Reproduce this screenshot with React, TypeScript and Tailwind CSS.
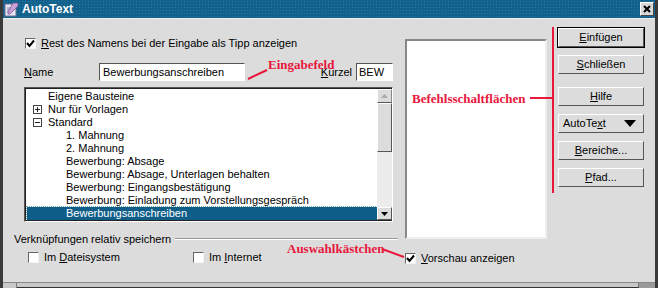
import React from 'react';

const Check = ({ checked }: { checked?: boolean }) => (
    <span className="inline-flex h-[11px] w-[11px] shrink-0 items-center justify-center border-t border-l border-[#666] border-r border-b border-r-[#f4f4f4] border-b-[#f4f4f4] bg-white">
        {checked && (
            <svg width="9" height="9" viewBox="0 0 9 9">
                <path d="M1 4 L3.5 7 L8 1.5" stroke="#000" strokeWidth="2" fill="none" />
            </svg>
        )}
    </span>
);

const Btn = ({ children, bold }: { children: React.ReactNode; bold?: boolean }) => (
    <div className={bold ? 'border border-black' : 'border border-transparent'}>
        <div className="flex h-[19px] items-center justify-center border-t border-l border-white border-r border-b border-r-[#555] border-b-[#555] bg-[#dcdcdc]">
            {children}
        </div>
    </div>
);

const treeItems = [
    { t: 'Eigene Bausteine', lvl: 0 },
    { t: 'Nur für Vorlagen', lvl: 0, icon: '+' },
    { t: 'Standard', lvl: 0, icon: '-' },
    { t: '1. Mahnung', lvl: 1 },
    { t: '2. Mahnung', lvl: 1 },
    { t: 'Bewerbung: Absage', lvl: 1 },
    { t: 'Bewerbung: Absage, Unterlagen behalten', lvl: 1 },
    { t: 'Bewerbung: Eingangsbestätigung', lvl: 1 },
    { t: 'Bewerbung: Einladung zum Vorstellungsgespräch', lvl: 1 },
    { t: 'Bewerbungsanschreiben', lvl: 1, sel: true },
    { t: 'Bücher', lvl: 1 },
];

const App = () => {
    return (
        <div className="relative h-[288px] w-[658px] overflow-hidden border-l-[3px] border-r-[3px] border-[#3a3a3a] bg-[#dcdcdc] font-['Liberation_Sans',Arial,sans-serif] text-[11px] text-black">
            {/* Titelleiste */}
            <div className="flex h-[18px] items-center bg-[#12618d] bg-[radial-gradient(#2a7aa6_1px,transparent_1px)] bg-[length:3px_3px] pl-[1px] pr-[1px]">
                <svg width="15" height="15" viewBox="0 0 15 15" className="mr-[3px]">
                    <rect x="1" y="2" width="11" height="12" fill="#e8e8f4" stroke="#6a6a8a" />
                    <path d="M3 6 h7 M3 8 h7 M3 10 h5" stroke="#7a7ab0" />
                    <path d="M9 1 L14 1 L14 4 L6 12 L4 12 L4 10 Z" fill="#c9a0d8" stroke="#705080" strokeWidth="0.7" />
                </svg>
                <span className="text-[12px] font-bold text-white">AutoText</span>
                <div className="ml-auto flex h-[14px] w-[14px] items-center justify-center border border-t-white border-l-white border-r-[#444] border-b-[#444] bg-[#d8d8d8]">
                    <svg width="8" height="8" viewBox="0 0 8 8">
                        <path d="M1 1 L7 7 M7 1 L1 7" stroke="#000" strokeWidth="2" />
                    </svg>
                </div>
            </div>

            <div className="flex h-[264px] border-t border-[#f0f0f0]">
                {/* Linke Spalte */}
                <div className="ml-[21px] flex w-[369px] flex-col">
                    <div className="mt-[17px] flex h-[14px] items-center gap-[5px] pl-[1px]">
                        <Check checked />
                        <span>
                            <u>R</u>est des Namens bei der Eingabe als Tipp anzeigen
                        </span>
                    </div>
                    <div className="mt-[13px] flex h-[18px] items-center">
                        <span className="w-[75px]">
                            <u>N</u>ame
                        </span>
                        <div className="flex h-[18px] w-[146px] items-center border-t border-l border-[#555] border-r border-b border-r-white border-b-white bg-white pl-[3px]">
                            Bewerbungsanschreiben
                        </div>
                        <span className="ml-auto mr-[4px]">
                            <u>K</u>ürzel
                        </span>
                        <div className="flex h-[18px] w-[37px] items-center border-t border-l border-[#555] border-r border-b border-r-white border-b-white bg-white pl-[2px]">
                            BEW
                        </div>
                    </div>
                    {/* Baumliste */}
                    <div className="mt-[6px] flex h-[135px] border-t border-l border-[#555] border-r border-b border-r-white border-b-white bg-white">
                        <div className="flex-1 overflow-hidden border border-[#222] border-r-0 pt-[1px] pl-[1px]">
                            {treeItems.map((it) => (
                                <div
                                    key={it.t}
                                    className={`flex h-[13px] items-center ${it.sel ? 'bg-[#0f5e89] text-white outline-1 outline-dotted outline-[#7aa]' : ''}`}
                                >
                                    <span className="flex w-[21px] justify-center">
                                        {it.icon && (
                                            <span className="relative flex h-[9px] w-[9px] items-center justify-center border border-[#444]">
                                                <span className="absolute h-px w-[5px] bg-[#222]" />
                                                {it.icon === '+' && <span className="absolute h-[5px] w-px bg-[#222]" />}
                                            </span>
                                        )}
                                    </span>
                                    <span className={it.lvl ? 'pl-[18px]' : ''}>{it.t}</span>
                                </div>
                            ))}
                        </div>
                        {/* Scrollbar */}
                        <div className="flex w-[15px] flex-col border-y border-[#222] bg-[#ececec]">
                            <div className="flex h-[14px] items-center justify-center border border-t-white border-l-white border-r-[#888] border-b-[#555] bg-[#dcdcdc]">
                                <svg width="7" height="4" viewBox="0 0 7 4">
                                    <path d="M0 4 L3.5 0 L7 4 Z" fill="#aaa" />
                                </svg>
                            </div>
                            <div className="h-[49px] border border-t-white border-l-white border-r-[#555] border-b-[#555] bg-[#dcdcdc]" />
                            <div className="flex-1" />
                            <div className="flex h-[13px] items-center justify-center border border-t-white border-l-white border-r-[#555] border-b-[#555] bg-[#dcdcdc]">
                                <svg width="7" height="4" viewBox="0 0 7 4">
                                    <path d="M0 0 L3.5 4 L7 0 Z" fill="#000" />
                                </svg>
                            </div>
                        </div>
                    </div>
                    {/* Gruppe */}
                    <div className="-ml-[10px] mt-[10px] flex h-[14px] w-[384px] items-center">
                        <span className="mr-[4px]">Verknüpfungen relativ speichern</span>
                        <div className="h-[2px] flex-1 border-t border-[#999] border-b border-b-white" />
                    </div>
                    <div className="mt-[5px] flex h-[12px] items-center pl-[4px]">
                        <div className="flex w-[165px] items-center gap-[5px]">
                            <Check />
                            <span>
                                Im <u>D</u>ateisystem
                            </span>
                        </div>
                        <div className="flex items-center gap-[5px]">
                            <Check />
                            <span>
                                Im <u>I</u>nternet
                            </span>
                        </div>
                    </div>
                </div>

                {/* Vorschau */}
                <div className="ml-[12px] flex w-[142px] flex-col">
                    <div className="mt-[20px] h-[200px] border-t-2 border-l-2 border-[#888] border-r-2 border-b-2 border-r-[#eee] border-b-[#eee] bg-white" />
                    <div className="mt-[13px] flex h-[12px] items-center gap-[5px]">
                        <Check checked />
                        <span>
                            <u>V</u>orschau anzeigen
                        </span>
                    </div>
                </div>

                {/* Schaltflächen */}
                <div className="ml-[10px] flex w-[88px] flex-col gap-[6px] pt-[8px]">
                    <Btn bold>
                        <span>
                            <u>E</u>infügen
                        </span>
                    </Btn>
                    <Btn>
                        <span>
                            <u>S</u>chließen
                        </span>
                    </Btn>
                    <div className="-my-[6px] h-[11px]" />
                    <Btn>
                        <span>
                            <u>H</u>ilfe
                        </span>
                    </Btn>
                    <Btn>
                        <div className="flex w-full items-center justify-between pl-[4px] pr-[7px]">
                            <span>
                                AutoTe<u>x</u>t
                            </span>
                            <svg width="12" height="7" viewBox="0 0 12 7">
                                <path d="M0 0 L12 0 L6 7 Z" fill="#000" />
                            </svg>
                        </div>
                    </Btn>
                    <Btn>
                        <span>
                            <u>B</u>ereiche...
                        </span>
                    </Btn>
                    <Btn>
                        <span>
                            <u>P</u>fad...
                        </span>
                    </Btn>
                </div>
            </div>

            {/* Fensterrahmen unten */}
            <div className="flex h-[6px] border-t border-[#888] bg-[#c8c8c8]">
                <div className="w-[14px] border-r border-[#777]" />
                <div className="flex-1 border-r border-[#777] border-b border-b-[#333]" />
                <div className="w-[16px] bg-[#9a9a9a]" />
            </div>

            {/* Anmerkungen */}
            <svg className="pointer-events-none absolute left-[-3px] top-0" width="658" height="288">
                <path d="M248 79 L267 70" stroke="#e8173c" strokeWidth="2" />
                <path d="M553 27 L553 193" stroke="#e8173c" strokeWidth="2" />
                <path d="M530 98 L553 98" stroke="#e8173c" strokeWidth="2" />
                <path d="M382 249 L404 257" stroke="#e8173c" strokeWidth="2" />
            </svg>
            <span className="absolute left-[265px] top-[58px] font-['Liberation_Serif',serif] text-[13px] leading-none font-bold text-[#e8173c]">
                Eingabefeld
            </span>
            <span className="absolute left-[409px] top-[92px] font-['Liberation_Serif',serif] text-[13px] leading-none font-bold text-[#e8173c]">
                Befehlsschaltflächen
            </span>
            <span className="absolute left-[284px] top-[242px] font-['Liberation_Serif',serif] text-[13px] leading-none font-bold text-[#e8173c]">
                Auswahlkästchen
            </span>
        </div>
    );
};

export default App;
